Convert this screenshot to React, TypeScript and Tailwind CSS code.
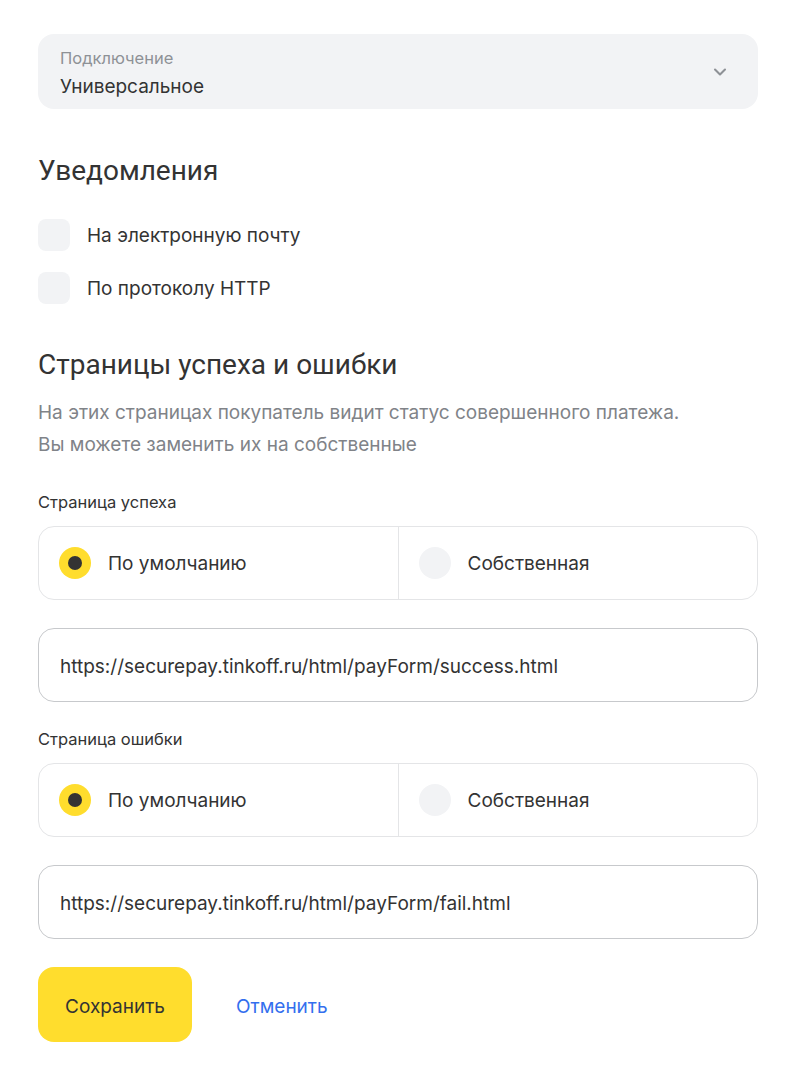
import { ChevronDown } from 'lucide-react';

function Checkbox({ label }: { label: string }) {
  return (
    <label className="flex items-center gap-[17px]">
      <span className="h-8 w-8 rounded-lg bg-[#f2f3f5]" />
      <span className="pt-[2px] text-[19px] text-[#333333]">{label}</span>
    </label>
  );
}

function RadioGroup({ selected }: { selected: 'default' | 'custom' }) {
  const options = [
    { key: 'default', label: 'По умолчанию' },
    { key: 'custom', label: 'Собственная' },
  ];
  return (
    <div className="flex h-[74px] rounded-2xl border border-[#e4e5e7]">
      {options.map((o, i) => (
        <div
          key={o.key}
          className={`flex flex-1 items-center gap-[17px] px-[20px] ${i > 0 ? 'border-l border-[#e4e5e7]' : ''}`}
        >
          {selected === o.key ? (
            <span className="flex h-8 w-8 items-center justify-center rounded-full bg-[#ffdd2d]">
              <span className="h-[14px] w-[14px] rounded-full bg-[#333333]" />
            </span>
          ) : (
            <span className="h-8 w-8 rounded-full bg-[#f2f3f5]" />
          )}
          <span className="pt-[2px] text-[19px] text-[#333333]">{o.label}</span>
        </div>
      ))}
    </div>
  );
}

function UrlInput({ value }: { value: string }) {
  return (
    <div className="flex h-[74px] items-center rounded-2xl border border-[#c7c9cc] px-[21px] pt-[5px]">
      <span className="text-[19px] text-[#333333]">{value}</span>
    </div>
  );
}

export default function App() {
  return (
    <div className="min-h-screen bg-white font-['Inter',sans-serif] text-[#333333]">
      <div className="mx-[38px] w-[720px] pt-[34px]">
        <div className="flex h-[75px] items-center justify-between rounded-2xl bg-[#f2f3f5] pl-[22px] pr-[28px]">
          <div className="flex flex-col pt-[3px]">
            <span className="text-[16.5px] leading-[20px] text-[#8e9196]">Подключение</span>
            <span className="mt-[7px] text-[19px] leading-[23px] text-[#333333]">Универсальное</span>
          </div>
          <ChevronDown className="h-5 w-5 text-[#8e9196]" strokeWidth={2.5} />
        </div>

        <h2 className="mt-[44px] font-['Roboto',sans-serif] text-[28px] leading-[36px] text-[#333333]">
          Уведомления
        </h2>
        <div className="mt-[30px] flex flex-col gap-[21px]">
          <Checkbox label="На электронную почту" />
          <Checkbox label="По протоколу HTTP" />
        </div>

        <h2 className="mt-[43px] font-['Roboto',sans-serif] text-[28px] leading-[36px] text-[#333333]">
          Страницы успеха и ошибки
        </h2>
        <p className="mt-[14px] text-[19px] leading-[32px] text-[#808388]">
          На этих страницах покупатель видит статус совершенного платежа.
          <br />
          Вы можете заменить их на собственные
        </p>

        <div className="mt-[31px] text-[16.5px] leading-[20px] text-[#333333]">Страница успеха</div>
        <div className="mt-[14px]">
          <RadioGroup selected="default" />
        </div>
        <div className="mt-[28px]">
          <UrlInput value="https://securepay.tinkoff.ru/html/payForm/success.html" />
        </div>

        <div className="mt-[27px] text-[16.5px] leading-[20px] text-[#333333]">Страница ошибки</div>
        <div className="mt-[14px]">
          <RadioGroup selected="default" />
        </div>
        <div className="mt-[28px]">
          <UrlInput value="https://securepay.tinkoff.ru/html/payForm/fail.html" />
        </div>

        <div className="mt-[28px] flex items-center gap-[44px] pb-[35px]">
          <button className="h-[75px] w-[154px] rounded-2xl bg-[#ffdd2d] pt-[5px] text-[19px] text-[#333333]">
            Сохранить
          </button>
          <button className="pt-[6px] text-[19px] text-[#336fee]">Отменить</button>
        </div>
      </div>
    </div>
  );
}
